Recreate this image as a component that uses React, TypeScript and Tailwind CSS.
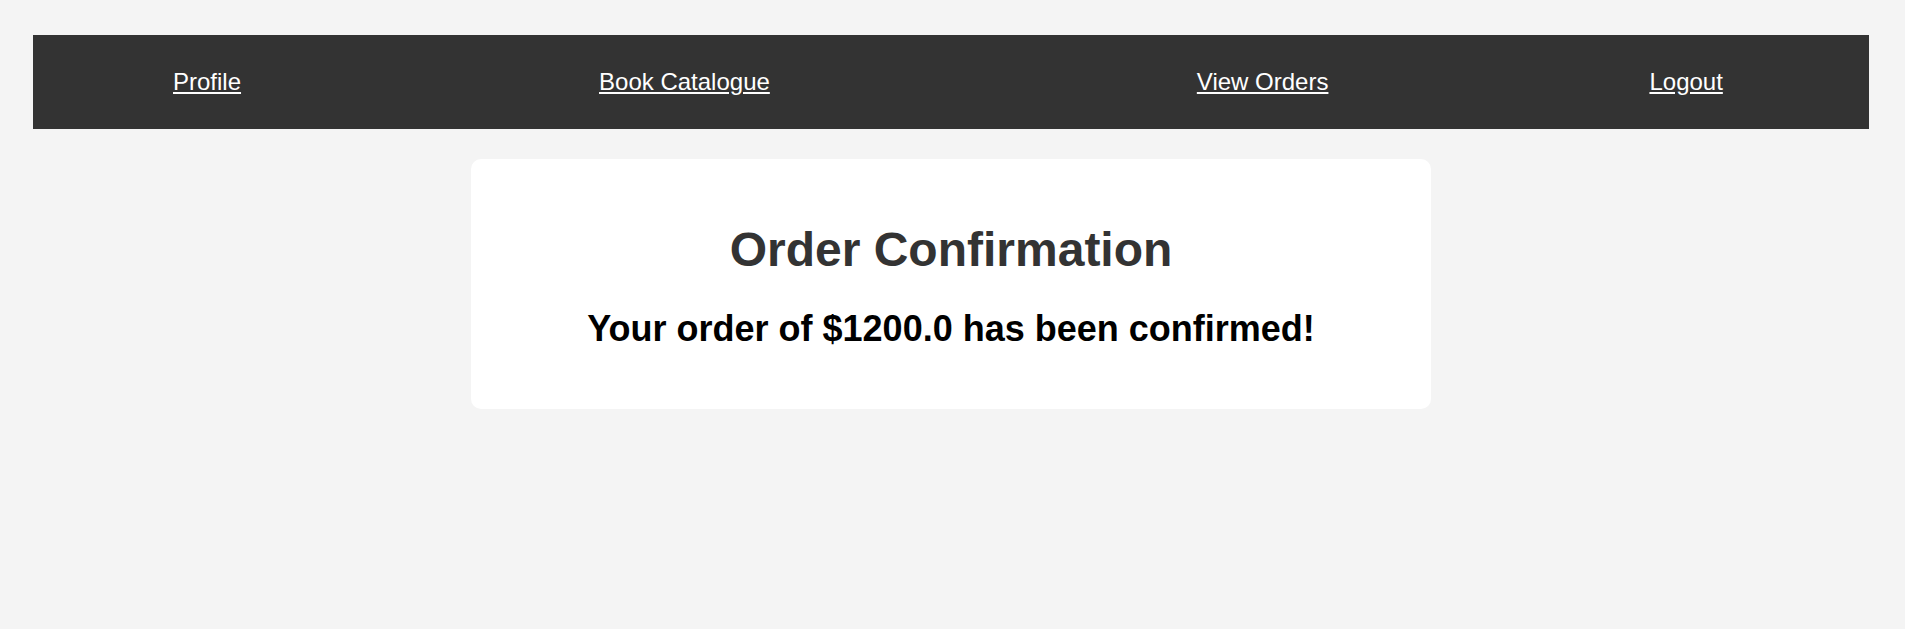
export default function App() {
  const links = [
    { label: "Profile", className: "ml-[140px]" },
    { label: "Book Catalogue", className: "ml-[358px]" },
    { label: "View Orders", className: "ml-[427px]" },
    { label: "Logout", className: "ml-[321px]" },
  ];

  return (
    <div className="min-h-[629px] bg-[#f4f4f4] pt-[35px] font-['Liberation_Sans',Arial,sans-serif]">
      <nav className="ml-[33px] mr-[36px] flex h-[94px] items-center bg-[#333333]">
        {links.map((link) => (
          <a
            key={link.label}
            href="#"
            className={`${link.className} text-[24px] leading-[28px] text-white underline`}
          >
            {link.label}
          </a>
        ))}
      </nav>

      <div className="ml-[471px] mt-[30px] flex w-[960px] flex-col items-center rounded-[10px] bg-white pt-[63px] pb-[60px]">
        <h1 className="text-[48px] leading-[55px] font-bold text-[#333333]">Order Confirmation</h1>
        <h2 className="mt-[31px] text-[36px] leading-[41px] font-bold text-black">
          Your order of $1200.0 has been confirmed!
        </h2>
      </div>
    </div>
  );
}
